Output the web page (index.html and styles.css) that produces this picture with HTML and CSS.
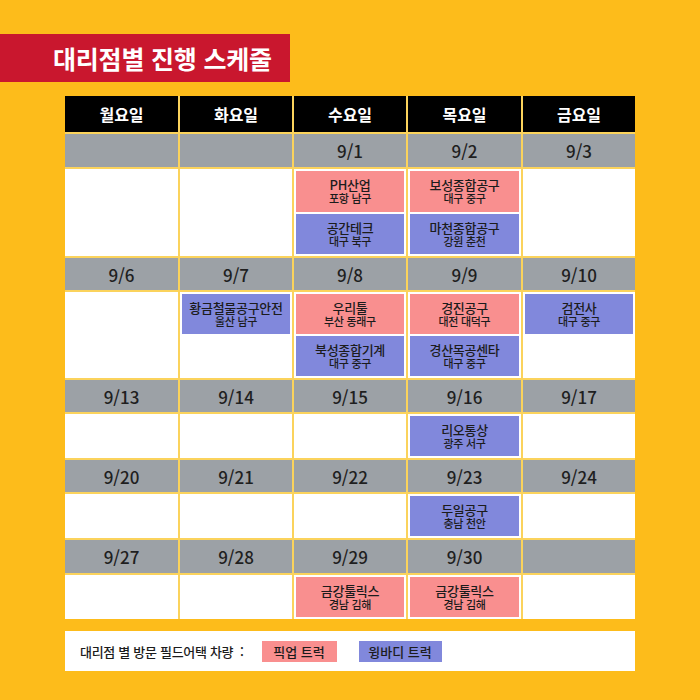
FILE: index.html
```html
<!DOCTYPE html>
<html lang="ko">
<head>
<meta charset="utf-8">
<link rel="stylesheet" href="styles.css">
</head>
<body>
<div class="page">
  <div class="banner"><h1 class="title">대리점별 진행 스케줄</h1></div>
  <div class="cal">
    <div class="hd">월요일</div><div class="hd">화요일</div><div class="hd">수요일</div><div class="hd">목요일</div><div class="hd">금요일</div>

    <div class="dt"></div><div class="dt"></div><div class="dt">9/1</div><div class="dt">9/2</div><div class="dt">9/3</div>
    <div class="slot"></div>
    <div class="slot"></div>
    <div class="slot"><div class="ev pink"><b>PH산업</b><span>포항 남구</span></div><div class="ev blue"><b>공간테크</b><span>대구 북구</span></div></div>
    <div class="slot"><div class="ev pink"><b>보성종합공구</b><span>대구 중구</span></div><div class="ev blue"><b>마천종합공구</b><span>강원 춘천</span></div></div>
    <div class="slot"></div>

    <div class="dt">9/6</div><div class="dt">9/7</div><div class="dt">9/8</div><div class="dt">9/9</div><div class="dt">9/10</div>
    <div class="slot"></div>
    <div class="slot"><div class="ev blue"><b>황금철물공구안전</b><span>울산 남구</span></div><div class="ev empty"></div></div>
    <div class="slot"><div class="ev pink"><b>우리툴</b><span>부산 동래구</span></div><div class="ev blue"><b>북성종합기계</b><span>대구 중구</span></div></div>
    <div class="slot"><div class="ev pink"><b>경진공구</b><span>대전 대덕구</span></div><div class="ev blue"><b>경산목공센타</b><span>대구 중구</span></div></div>
    <div class="slot"><div class="ev blue"><b>검전사</b><span>대구 중구</span></div><div class="ev empty"></div></div>

    <div class="dt">9/13</div><div class="dt">9/14</div><div class="dt">9/15</div><div class="dt">9/16</div><div class="dt">9/17</div>
    <div class="slot"></div><div class="slot"></div><div class="slot"></div>
    <div class="slot"><div class="ev blue"><b>리오통상</b><span>광주 서구</span></div></div>
    <div class="slot"></div>

    <div class="dt">9/20</div><div class="dt">9/21</div><div class="dt">9/22</div><div class="dt">9/23</div><div class="dt">9/24</div>
    <div class="slot"></div><div class="slot"></div><div class="slot"></div>
    <div class="slot"><div class="ev blue"><b>두일공구</b><span>충남 천안</span></div></div>
    <div class="slot"></div>

    <div class="dt">9/27</div><div class="dt">9/28</div><div class="dt">9/29</div><div class="dt">9/30</div><div class="dt"></div>
    <div class="slot"></div><div class="slot"></div>
    <div class="slot"><div class="ev pink"><b>금강툴릭스</b><span>경남 김해</span></div></div>
    <div class="slot"><div class="ev pink"><b>금강툴릭스</b><span>경남 김해</span></div></div>
    <div class="slot"></div>
  </div>
  <div class="legend">
    <span class="legend-label">대리점 별 방문 필드어택 차량 &nbsp;:</span>
    <span class="chip pink">픽업 트럭</span>
    <span class="chip blue">윙바디 트럭</span>
  </div>
</div>
</body>
</html>
```

FILE: styles.css
```css
* { box-sizing: border-box; }
html, body {
  margin: 0;
  padding: 0;
  background: #fdbc1b;
  font-family: "Noto Sans CJK KR", "Noto Sans", sans-serif;
  color: #1c1c1c;
}
.page {
  width: 700px;
  height: 700px;
  padding-top: 34px;
}
.banner {
  width: 290px;
  height: 48px;
  background: #c9172e;
  display: flex;
  align-items: center;
  padding-left: 53px;
}
.title {
  margin: 0;
  color: #fff;
  font-size: 25px;
  font-weight: 700;
  letter-spacing: -0.2px;
  line-height: 1;
}
.cal {
  margin: 14px 0 0 65px;
  width: 570px;
  display: grid;
  grid-template-columns: 113px 112px 112px 113px 112px;
  grid-template-rows: 36px 33px 87px 32px 86px 32px 44px 32px 44px 33px 44px;
  gap: 2px;
  background: #fbd35c;
}
.hd {
  background: #000;
  color: #fff;
  font-weight: 700;
  font-size: 16px;
  display: flex;
  align-items: center;
  justify-content: center;
}
.dt {
  background: #9ca1a6;
  color: #1f1f1f;
  font-weight: 500;
  font-size: 17px;
  display: flex;
  align-items: center;
  justify-content: center;
}
.slot {
  background: #fff;
  padding: 2px;
  display: flex;
  flex-direction: column;
  gap: 2px;
}
.ev {
  flex: 1;
  display: flex;
  flex-direction: column;
  align-items: center;
  padding-top: 6px;
  text-align: center;
}
.ev b {
  font-size: 13px;
  font-weight: 500;
  line-height: 15px;
  letter-spacing: -0.3px;
}
.ev span {
  font-size: 11px;
  font-weight: 500;
  line-height: 13px;
  letter-spacing: -0.3px;
}
.pink { background: #f98f8f; }
.blue { background: #8188dc; }
.empty { background: transparent; }
.legend {
  margin: 12px 0 0 65px;
  width: 570px;
  height: 40px;
  background: #fff;
  display: flex;
  align-items: center;
  padding-left: 15px;
  font-size: 13px;
  font-weight: 500;
}
.legend-label { margin-right: 18px; letter-spacing: -0.3px; }
.chip {
  height: 21px;
  display: flex;
  align-items: center;
  justify-content: center;
  font-size: 13px;
  font-weight: 500;
}
.chip.pink { width: 75px; margin-right: 22px; }
.chip.blue { width: 83px; }
```
